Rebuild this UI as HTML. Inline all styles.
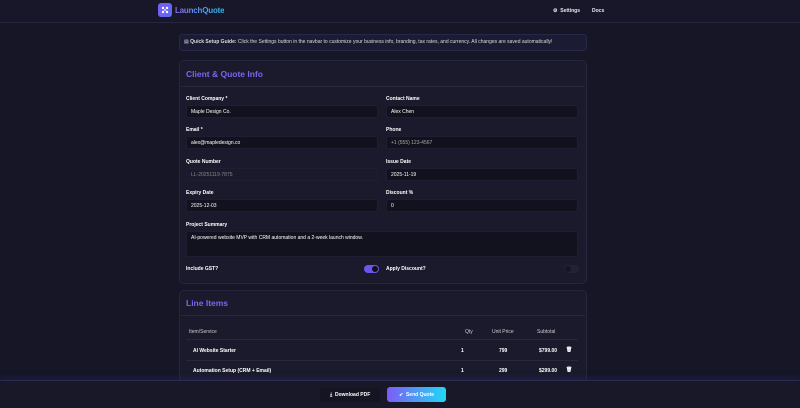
<!DOCTYPE html>
<html style="width:800px;height:408px;overflow:hidden"><head><style>
*{box-sizing:border-box;margin:0;padding:0}
body{width:800px;height:408px;overflow:hidden;background:#161627;font-family:"Liberation Sans",sans-serif;color:#e8e8f0;position:relative;font-size:5px}
.a{position:absolute}
.nav{left:0;top:0;width:800px;height:23px;border-bottom:1px solid #262640;background:#171729}
.logo{left:158px;top:3px;width:14px;height:14px;border-radius:3px;background:linear-gradient(135deg,#7b5cf5,#5a6cf0)}
.brand{left:175px;top:6px;font-size:8px;font-weight:bold;letter-spacing:-0.2px;background:linear-gradient(90deg,#8a6cf5,#22c3ee);-webkit-background-clip:text;color:transparent}
.b{font-weight:bold}
.card{border:1px solid #25253d;border-radius:5px;background:#1a1a2c}
.title{font-size:8.5px;font-weight:bold;color:#7a66f0}
.lbl{font-size:5px;font-weight:bold;color:#fff}
.inp{height:13px;background:#12121f;border:1px solid #1e1e33;border-radius:2px;font-size:5px;padding:3px 4px;color:#fff}
.div{height:1px;background:#26263e}
</style></head><body>
<div class="a nav"></div>
<div class="a logo"><svg width="14" height="14" viewBox="0 0 14 14"><g fill="#fff"><circle cx="5" cy="5" r="1.2"/><circle cx="9" cy="5" r="1.2"/><circle cx="5" cy="9" r="1.2"/><circle cx="9" cy="9" r="1.2"/><circle cx="7" cy="7" r="0.9"/></g></svg></div>
<div class="a brand">LaunchQuote</div>
<div class="a b" style="left:553px;top:8px;font-size:5px">⚙ &nbsp;Settings</div>
<div class="a b" style="left:592px;top:8px;font-size:5px">Docs</div>

<div class="a" style="left:179px;top:34px;width:408px;height:17px;border:1px solid #27274a;border-radius:3px;background:#1b1b33"></div>
<div class="a" style="left:184px;top:39px;font-size:5px;color:#ddd">▤ <b>Quick Setup Guide:</b> Click the Settings button in the navbar to customize your business info, branding, tax rates, and currency. All changes are saved automatically!</div>

<div class="a card" style="left:179px;top:60px;width:408px;height:224px"></div>
<div class="a title" style="left:186px;top:69px">Client &amp; Quote Info</div>
<div class="a div" style="left:181px;top:86px;width:404px"></div>

<div class="a lbl" style="left:186px;top:96px">Client Company *</div>
<div class="a lbl" style="left:386px;top:96px">Contact Name</div>
<div class="a inp" style="left:186px;top:105px;width:192px">Maple Design Co.</div>
<div class="a inp" style="left:386px;top:105px;width:192px">Alex Chen</div>

<div class="a lbl" style="left:186px;top:127px">Email *</div>
<div class="a lbl" style="left:386px;top:127px">Phone</div>
<div class="a inp" style="left:186px;top:136px;width:192px">alex@mapledesign.co</div>
<div class="a inp" style="left:386px;top:136px;width:192px;color:#aaa">+1 (555) 123-4567</div>

<div class="a lbl" style="left:186px;top:159px">Quote Number</div>
<div class="a lbl" style="left:386px;top:159px">Issue Date</div>
<div class="a inp" style="left:186px;top:168px;width:192px;color:#888;background:#1a1a2c">LL-20251119-7875</div>
<div class="a inp" style="left:386px;top:168px;width:192px">2025-11-19</div>

<div class="a lbl" style="left:186px;top:190px">Expiry Date</div>
<div class="a lbl" style="left:386px;top:190px">Discount %</div>
<div class="a inp" style="left:186px;top:199px;width:192px">2025-12-03</div>
<div class="a inp" style="left:386px;top:199px;width:192px">0</div>

<div class="a lbl" style="left:186px;top:222px">Project Summary</div>
<div class="a inp" style="left:186px;top:231px;width:392px;height:26px">AI-powered website MVP with CRM automation and a 2-week launch window.</div>

<div class="a lbl" style="left:186px;top:266px">Include GST?</div>
<div class="a" style="left:364px;top:265px;width:15px;height:8px;border-radius:4px;background:#6b55ef"><div class="a" style="left:8px;top:1px;width:6px;height:6px;border-radius:3px;background:#111"></div></div>
<div class="a lbl" style="left:386px;top:266px">Apply Discount?</div>
<div class="a" style="left:564px;top:265px;width:15px;height:8px;border-radius:4px;background:#222236"><div class="a" style="left:1px;top:1px;width:6px;height:6px;border-radius:3px;background:#151525"></div></div>

<div class="a card" style="left:179px;top:290px;width:408px;height:118px"></div>
<div class="a title" style="left:186px;top:298px">Line Items</div>
<div class="a div" style="left:181px;top:315px;width:404px"></div>
<div class="a" style="left:189px;top:329px;font-size:5px;color:#ccc">Item/Service</div>
<div class="a" style="left:465px;top:329px;font-size:5px;color:#ccc">Qty</div>
<div class="a" style="left:492px;top:329px;font-size:5px;color:#ccc">Unit Price</div>
<div class="a" style="left:537px;top:329px;font-size:5px;color:#ccc">Subtotal</div>
<div class="a div" style="left:186px;top:339px;width:392px"></div>
<div class="a lbl" style="left:193px;top:348px">AI Website Starter</div>
<div class="a lbl" style="left:461px;top:348px">1</div>
<div class="a lbl" style="left:499px;top:348px">799</div>
<div class="a lbl" style="left:539px;top:348px">$799.00</div>
<div class="a lbl" style="left:566px;top:347px">🗑</div>
<div class="a div" style="left:186px;top:360px;width:392px"></div>
<div class="a lbl" style="left:193px;top:368px">Automation Setup (CRM + Email)</div>
<div class="a lbl" style="left:461px;top:368px">1</div>
<div class="a lbl" style="left:499px;top:368px">299</div>
<div class="a lbl" style="left:539px;top:368px">$299.00</div>
<div class="a lbl" style="left:566px;top:367px">🗑</div>

<div class="a" style="left:0;top:380px;width:800px;height:28px;background:#181828;border-top:1px solid #2b2b50;box-shadow:0 -2px 6px rgba(60,50,150,.25)"></div>
<div class="a lbl" style="left:320px;top:388px;width:60px;height:14px;background:#141422;border-radius:2px;padding:4px 0 0 10px">⤓ &nbsp;Download PDF</div>
<div class="a lbl" style="left:387px;top:387px;width:59px;height:15px;border-radius:3px;background:linear-gradient(90deg,#7c5cf5,#20d8f5);padding:5px 0 0 12px">➶ &nbsp;Send Quote</div>
</body></html>
